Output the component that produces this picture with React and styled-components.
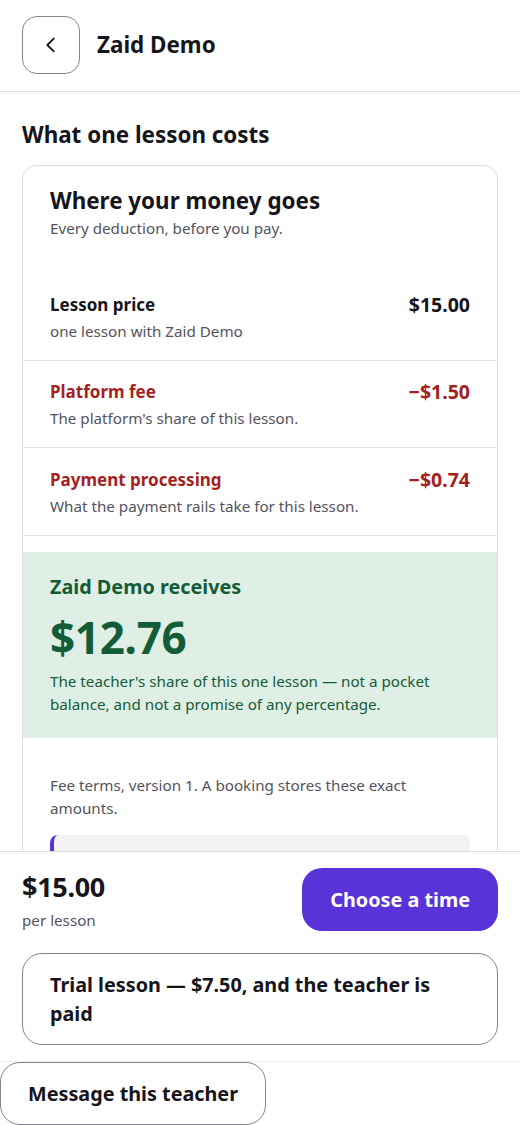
import React from "react";
import styled, { createGlobalStyle } from "styled-components";

const Global = createGlobalStyle`
  html, body { margin: 0; padding: 0; background: #fff; }
  body { font-family: "Noto Sans", "Open Sans", sans-serif; color: #16151c; }
  * { box-sizing: border-box; }
`;

const Page = styled.div`
  height: 100vh;
  display: flex;
  flex-direction: column;
  overflow: hidden;
`;

const Header = styled.header`
  display: flex;
  align-items: center;
  gap: 17px;
  padding: 16px 22px 17px;
  border-bottom: 1px solid #dedde3;
  flex: none;
`;

const BackButton = styled.button`
  width: 58px;
  height: 58px;
  border-radius: 15px;
  border: 1.5px solid #85838d;
  background: #fff;
  display: flex;
  align-items: center;
  justify-content: center;
  padding: 0;
  color: #16151c;
`;

const Title = styled.h1`
  margin: 0;
  font-size: 22.4px;
  font-weight: 700;
  line-height: 1.3;
`;

const Scroll = styled.main`
  flex: 1;
  min-height: 0;
  overflow: hidden;
  padding: 28px 22px 0;
`;

const SectionTitle = styled.h2`
  margin: 0 0 16px;
  font-size: 22.4px;
  font-weight: 700;
  line-height: 1.3;
`;

const Card = styled.section`
  border: 1px solid #dcdbe0;
  border-radius: 14px;
  overflow: hidden;
`;

const CardHead = styled.div`
  padding: 20px 27px 33px;
  display: flex;
  flex-direction: column;
  gap: 2px;
`;

const CardTitle = styled.h3`
  margin: 0;
  font-size: 22.4px;
  font-weight: 700;
  line-height: 1.3;
`;

const Muted = styled.p`
  margin: 0;
  font-size: 15.2px;
  line-height: 23px;
  color: #55535d;
`;

const Row = styled.div`
  display: flex;
  justify-content: space-between;
  align-items: flex-start;
  padding: 20.5px 27px 17px;
  border-bottom: 1px solid #e4e3e8;
`;

const RowText = styled.div`
  display: flex;
  flex-direction: column;
  gap: 4px;
`;

const RowLabel = styled.div`
  font-size: 17px;
  font-weight: 700;
  line-height: 22px;
  color: ${(p) => (p.$deduct ? "#a51f1f" : "#16151c")};
`;

const Amount = styled.div`
  font-size: 19.5px;
  font-weight: 700;
  line-height: 22px;
  color: ${(p) => (p.$deduct ? "#a51f1f" : "#16151c")};
`;

const Receives = styled.div`
  margin-top: 16px;
  background: #e0efe6;
  padding: 22px 27px 22px;
  color: #135c37;
`;

const ReceivesTitle = styled.div`
  font-size: 19.8px;
  font-weight: 700;
  line-height: 1.3;
`;

const BigAmount = styled.div`
  font-size: 44px;
  font-weight: 700;
  line-height: 1.3;
  margin: 10px 0 3px;
  letter-spacing: -0.3px;
`;

const ReceivesNote = styled.p`
  margin: 0;
  font-size: 15.2px;
  line-height: 23px;
`;

const Terms = styled.div`
  padding: 36px 27px 0;
  display: flex;
  flex-direction: column;
  gap: 15px;
`;

const Callout = styled.div`
  height: 40px;
  border-radius: 8px;
  background: #f3f3f6;
  border-left: 4px solid #5a33d6;
`;

const BottomBar = styled.div`
  flex: none;
  border-top: 1px solid #dedde3;
  padding: 16px 22px 16px;
  display: flex;
  flex-direction: column;
  gap: 21px;
  background: #fff;
`;

const PriceRow = styled.div`
  display: flex;
  justify-content: space-between;
  align-items: flex-start;
`;

const PriceBlock = styled.div`
  display: flex;
  flex-direction: column;
`;

const Price = styled.div`
  font-size: 27px;
  font-weight: 700;
  line-height: 35px;
  letter-spacing: -0.3px;
  margin-top: 1px;
`;

const PerLesson = styled.div`
  font-size: 15.2px;
  line-height: 23px;
  color: #55535d;
  margin-top: 5px;
`;

const Primary = styled.button`
  height: 63px;
  padding: 0 28px;
  border: none;
  border-radius: 20px;
  background: #5932d8;
  color: #fff;
  font-family: inherit;
  font-size: 19.8px;
  font-weight: 700;
`;

const Outline = styled.button`
  border: 1.5px solid #85838d;
  border-radius: 20px;
  background: #fff;
  color: #16151c;
  font-family: inherit;
  font-size: 19.8px;
  font-weight: 700;
  line-height: 29px;
  text-align: left;
  padding: ${(p) => (p.$tall ? "16px 50px 16px 27px" : "16px 27px")};
  width: ${(p) => (p.$full ? "100%" : "auto")};
`;

const MessageRow = styled.div`
  flex: none;
  border-top: 1px solid #ecebef;
  display: flex;
`;

const rows = [
  { label: "Lesson price", sub: "one lesson with Zaid Demo", amount: "$15.00" },
  { label: "Platform fee", sub: "The platform's share of this lesson.", amount: "\u2212$1.50", deduct: true },
  { label: "Payment processing", sub: "What the payment rails take for this lesson.", amount: "\u2212$0.74", deduct: true },
];

export default function App() {
  return (
    <Page>
      <Global />
      <Header>
        <BackButton aria-label="Back">
          <svg width="22" height="22" viewBox="0 0 24 24" fill="none" stroke="currentColor" strokeWidth="2" strokeLinecap="round" strokeLinejoin="round">
            <path d="M15 5l-7 7 7 7" />
          </svg>
        </BackButton>
        <Title>Zaid Demo</Title>
      </Header>
      <Scroll>
        <SectionTitle>What one lesson costs</SectionTitle>
        <Card>
          <CardHead>
            <CardTitle>Where your money goes</CardTitle>
            <Muted>Every deduction, before you pay.</Muted>
          </CardHead>
          {rows.map((r) => (
            <Row key={r.label}>
              <RowText>
                <RowLabel $deduct={r.deduct}>{r.label}</RowLabel>
                <Muted>{r.sub}</Muted>
              </RowText>
              <Amount $deduct={r.deduct}>{r.amount}</Amount>
            </Row>
          ))}
          <Receives>
            <ReceivesTitle>Zaid Demo receives</ReceivesTitle>
            <BigAmount>$12.76</BigAmount>
            <ReceivesNote>
              The teacher's share of this one lesson — not a pocket balance, and not a promise of any percentage.
            </ReceivesNote>
          </Receives>
          <Terms>
            <Muted>Fee terms, version 1. A booking stores these exact amounts.</Muted>
            <Callout />
          </Terms>
        </Card>
      </Scroll>
      <BottomBar>
        <PriceRow>
          <PriceBlock>
            <Price>$15.00</Price>
            <PerLesson>per lesson</PerLesson>
          </PriceBlock>
          <Primary>Choose a time</Primary>
        </PriceRow>
        <Outline $full $tall>Trial lesson — $7.50, and the teacher is paid</Outline>
      </BottomBar>
      <MessageRow>
        <Outline>Message this teacher</Outline>
      </MessageRow>
    </Page>
  );
}
